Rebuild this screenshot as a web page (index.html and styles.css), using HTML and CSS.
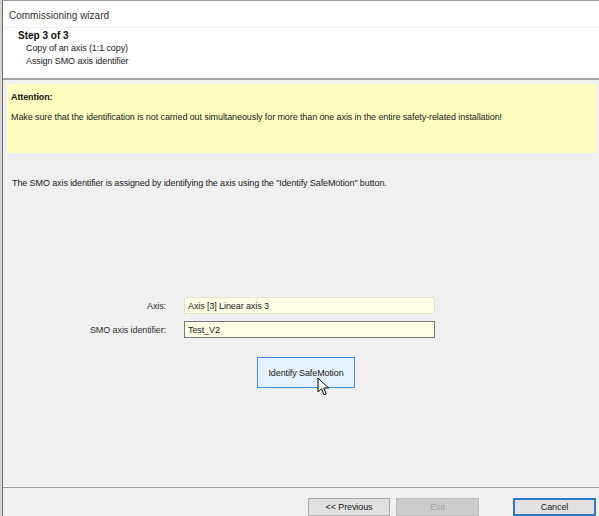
FILE: index.html
```html
<!DOCTYPE html>
<html lang="en">
<head>
    <meta charset="UTF-8">
    <title>Commissioning wizard</title>
    <link rel="stylesheet" href="styles.css">
</head>
<body>
    <div class="wizard-window">
        <div class="title-bar">Commissioning wizard</div>

        <div class="step-header">
            <div class="step-title">Step 3 of 3</div>
            <div class="step-sub">Copy of an axis (1:1 copy)</div>
            <div class="step-sub">Assign SMO axis identifier</div>
        </div>

        <div class="wizard-body">
            <div class="attention-box">
                <div class="attention-title">Attention:</div>
                <div class="attention-text">Make sure that the identification is not carried out simultaneously for more than one axis in the entire safety-related installation!</div>
            </div>

            <p class="info-text">The SMO axis identifier is assigned by identifying the axis using the "Identify SafeMotion" button.</p>

            <div class="form-grid">
                <label for="axis">Axis:</label>
                <input type="text" id="axis" class="field readonly" value="Axis [3] Linear axis 3" readonly>
                <label for="smo-id">SMO axis identifier:</label>
                <input type="text" id="smo-id" class="field" value="Test_V2">
            </div>

            <div class="identify-wrap">
                <button type="button" class="identify-button">Identify SafeMotion</button>
                <svg class="cursor" width="13" height="20" viewBox="0 0 13 20">
                    <path d="M1 1 L1 15 L4.5 11.8 L7 17.8 L9.2 16.8 L6.8 11 L11.5 11 Z" fill="#fff" stroke="#000" stroke-width="1" stroke-linejoin="round"/>
                </svg>
            </div>
        </div>

        <div class="wizard-footer">
            <button type="button" class="nav-button">&lt;&lt; Previous</button>
            <button type="button" class="nav-button" disabled>Exit</button>
            <button type="button" class="nav-button default">Cancel</button>
        </div>
    </div>
</body>
</html>
```

FILE: styles.css
```css
* {
    margin: 0;
    padding: 0;
    box-sizing: border-box;
}

body {
    width: 599px;
    height: 516px;
    overflow: hidden;
    background: #d6d4cc;
    font-family: 'Liberation Sans', Arial, sans-serif;
    font-size: 9px;
    letter-spacing: -0.1px;
    color: #222;
}

.wizard-window {
    margin-left: 2px;
    height: 516px;
    border-left: 1px solid #6b6b6b;
    border-top: 1px solid #9c9c9c;
    background: #f0f0f0;
    display: flex;
    flex-direction: column;
    overflow: hidden;
}

.title-bar {
    height: 26px;
    line-height: 23px;
    padding: 3px 0 0 6px;
    background: white;
    font-size: 10px;
    letter-spacing: 0;
    color: #333;
}

.step-header {
    height: 53px;
    padding: 1px 0 0 15px;
    background: white;
    border-top: 1px solid #f3f3f3;
    border-bottom: 2px solid #a6a6a6;
    line-height: 13px;
}

.step-title {
    font-weight: bold;
    font-size: 10px;
    letter-spacing: 0;
    color: #111;
}

.step-sub {
    padding-left: 8px;
}

.wizard-body {
    padding-top: 4px;
}

.attention-box {
    margin-left: 4px;
    width: 589px;
    height: 69px;
    padding: 7px 0 0 4px;
    background: #ffffc0;
    line-height: 13px;
}

.attention-title {
    font-weight: bold;
    color: #111;
}

.attention-text {
    margin-top: 7px;
}

.info-text {
    margin-top: 24px;
    padding-left: 9px;
    line-height: 13px;
}

.form-grid {
    margin-top: 107px;
    display: grid;
    grid-template-columns: 163px 251px;
    column-gap: 18px;
    row-gap: 7px;
    align-items: center;
}

.form-grid label {
    text-align: right;
    color: #333;
}

.field {
    height: 17px;
    padding: 0 3px;
    font-family: inherit;
    font-size: 9px;
    letter-spacing: -0.1px;
    color: #222;
    background: #ffffe6;
    border: 1px solid #7a7a7a;
}

.field.readonly {
    border-color: #e2e2cf;
}

.identify-wrap {
    position: relative;
    margin: 19px 0 0 254px;
    width: 98px;
}

.identify-button {
    width: 98px;
    height: 31px;
    font-family: inherit;
    font-size: 9px;
    letter-spacing: -0.1px;
    color: #222;
    background: #e5f1fb;
    border: 1px solid #3c8de0;
}

.cursor {
    position: absolute;
    left: 60px;
    top: 20px;
}

.wizard-footer {
    margin-top: auto;
    height: 29px;
    padding: 10px 0 0 305px;
    border-top: 1px solid #a0a0a0;
    display: flex;
    align-items: flex-start;
    gap: 6px;
}

.nav-button {
    width: 82px;
    height: 18px;
    flex-shrink: 0;
    font-family: inherit;
    font-size: 9px;
    letter-spacing: -0.1px;
    color: #222;
    background: #e1e1e1;
    border: 1px solid #adadad;
}

.nav-button:disabled {
    width: 83px;
    color: #a6a6a6;
    background: #cccccc;
    border-color: #bfbfbf;
}

.nav-button.default {
    margin-left: 28px;
    width: 83px;
    border: 2px solid #2f78c8;
}
```
